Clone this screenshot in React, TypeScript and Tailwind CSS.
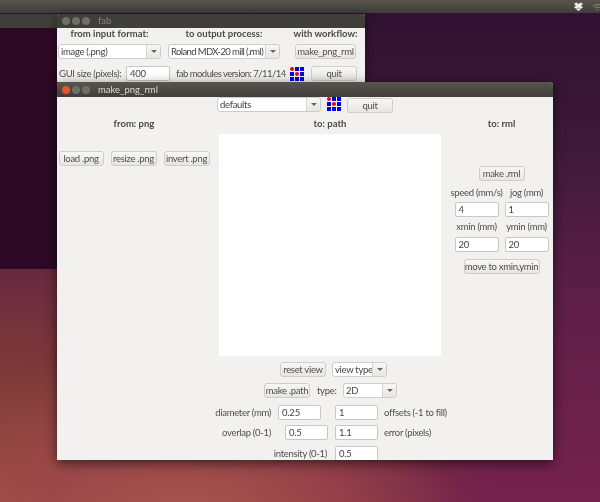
import type { ReactNode } from "react";

function Dots() {
  const red = [0, 4];
  return (
    <svg width="14" height="14" viewBox="0 0 14 14" className="shrink-0">
      {[0, 1, 2, 3, 4, 5, 6, 7, 8].map((i) => (
        <rect
          key={i}
          x={(i % 3) * 5}
          y={Math.floor(i / 3) * 5}
          width="4"
          height="4"
          rx={red.includes(i) ? 2 : 0}
          fill={red.includes(i) ? "#f00000" : "#0000e6"}
        />
      ))}
    </svg>
  );
}

function Btn({ w, children }: { w: string; children: ReactNode }) {
  return (
    <div className={`${w} h-[15px] shrink-0 flex items-center justify-center rounded-[3px] border border-[#cfcdc9] bg-gradient-to-b from-[#f8f7f6] to-[#e8e6e3] text-[#4f4f4f] text-[9.5px] tracking-[-0.3px] leading-none whitespace-nowrap`}>
      {children}
    </div>
  );
}

function Field({ w = "w-[44px]", children }: { w?: string; children: ReactNode }) {
  return (
    <div className={`${w} h-[15px] shrink-0 flex items-center pl-[3px] rounded-[2px] border border-[#c9c7c3] bg-white text-[#444] text-[9.5px] tracking-[-0.2px] leading-none`}>
      {children}
    </div>
  );
}

function Combo({ w, children }: { w: string; children: ReactNode }) {
  return (
    <div className={`${w} h-[15px] shrink-0 flex rounded-[3px] border border-[#cfcdc9] bg-white text-[#444] text-[9.5px] tracking-[-0.3px] leading-none overflow-hidden`}>
      <div className="flex-1 flex items-center pl-[2px] whitespace-nowrap overflow-hidden">{children}</div>
      <div className="w-[14px] shrink-0 flex items-center justify-center border-l border-[#d5d3cf] bg-gradient-to-b from-[#f8f7f6] to-[#e8e6e3]">
        <div className="w-0 h-0 border-l-[3px] border-r-[3px] border-t-[3px] border-l-transparent border-r-transparent border-t-[#666]" />
      </div>
    </div>
  );
}

function Controls({ active }: { active?: boolean }) {
  return (
    <div className="flex gap-[2px] items-center">
      <div className={`w-[8px] h-[8px] rounded-full ${active ? "bg-[#e2572c]" : "bg-[#6f6e67]"}`} />
      <div className="w-[8px] h-[8px] rounded-full bg-[#6f6e67]" />
      <div className="w-[8px] h-[8px] rounded-full bg-[#6f6e67]" />
    </div>
  );
}

function Label({ children, className = "" }: { children: ReactNode; className?: string }) {
  return <div className={`text-[9.5px] tracking-[-0.3px] leading-[10px] text-[#4f4f4f] whitespace-nowrap shrink-0 ${className}`}>{children}</div>;
}

function Head({ children, className = "" }: { children: ReactNode; className?: string }) {
  return <div className={`text-[9.5px] leading-[10px] font-bold text-[#4a4a4a] whitespace-nowrap shrink-0 ${className}`}>{children}</div>;
}

export default function App() {
  return (
    <div className="relative w-[600px] h-[502px] overflow-hidden font-['Lato','Noto_Sans',sans-serif] blur-[0.3px] bg-[radial-gradient(ellipse_280px_200px_at_32%_108%,#ac574e_0%,rgba(160,72,78,0.7)_55%,rgba(120,40,75,0)_100%),radial-gradient(ellipse_500px_300px_at_0%_100%,#9c4e40_0%,rgba(126,60,54,0.9)_45%,rgba(92,42,44,0)_100%),linear-gradient(to_bottom,#2f1030_0%,#3f1a38_30%,#5e1f46_60%,#75224e_100%)]">
      {/* window behind the others, at the left edge */}
      <div className="absolute left-0 top-[14px] w-[57px] h-[255px] bg-[#2c0a26]">
        <div className="h-[14px] bg-[#3f3e39]" />
      </div>

      {/* top panel */}
      <div className="absolute top-0 left-0 w-full h-[13px] bg-gradient-to-b from-[#57554d] to-[#3e3d38] flex items-center justify-end gap-[9px] overflow-hidden">
        <svg width="9" height="9" viewBox="0 0 9 9" fill="#eee"><path d="M2.3 0.5 4.5 2 6.7 0.5 9 2.1 7 3.7 9 5.3 6.7 6.9 4.5 5.4 2.3 6.9 0 5.3 2 3.7 0 2.1zM2.4 7.4 4.5 6 6.6 7.4 4.5 8.9z" /></svg>
        <svg width="8" height="8" viewBox="0 0 8 8" fill="none" stroke="#8a8982" strokeWidth="1"><path d="M0.5 3.5a8 8 0 0 1 10 0M2.5 5a5 5 0 0 1 6 0M4.5 7a2 2 0 0 1 2 0" /></svg>
      </div>

      {/* fab window */}
      <div className="absolute left-[57px] top-[14px] w-[308px] bg-[#f2f1f0] rounded-t-[3px] shadow-[0_2px_10px_rgba(0,0,0,0.45)]">
        <div className="h-[14px] bg-[#3f3e39] rounded-t-[3px] flex items-center pl-[5px] gap-[8px]">
          <Controls />
          <span className="text-[9.5px] leading-none text-[#85847c]">fab</span>
        </div>
        <div className="h-[54px] pl-[1px] pt-[1px]">
          <div className="flex">
            <Head className="w-[103px] text-center">from input format:</Head>
            <Head className="w-[112px] ml-[7px] text-center">to output process:</Head>
            <Head className="w-[61px] ml-[15px] flex justify-center">with workflow:</Head>
          </div>
          <div className="flex items-center mt-[5px]">
            <Combo w="w-[103px]">image (.png)</Combo>
            <Combo w="w-[112px] ml-[7px]"><span className="tracking-[-0.62px]">Roland MDX-20 mill (.rml)</span></Combo>
            <Btn w="w-[61px] ml-[15px]">make_png_rml</Btn>
          </div>
          <div className="flex items-center mt-[7px]">
            <Label className="w-[68px] pl-[1px]">GUI size (pixels):</Label>
            <Field>400</Field>
            <Label className="w-[120px] pl-[6px] tracking-[-0.52px]">fab modules version: 7/11/14</Label>
            <Dots />
            <Btn w="w-[46px] ml-[7px]">quit</Btn>
          </div>
        </div>
      </div>

      {/* make_png_rml window */}
      <div className="absolute left-[57px] top-[82px] w-[496px] h-[378px] bg-[#f2f1f0] rounded-t-[4px] shadow-[0_3px_12px_rgba(0,0,0,0.6)]">
        <div className="h-[15px] rounded-t-[4px] bg-gradient-to-b from-[#57554d] to-[#3f3e39] flex items-center pl-[5px] gap-[8px]">
          <Controls active />
          <span className="text-[9.5px] leading-none text-[#dfdbd2]">make_png_rml</span>
        </div>

        <div className="flex items-start gap-[6px] pl-[160px] h-[16px]">
          <Combo w="w-[104px]">defaults</Combo>
          <Dots />
          <div className="mt-[1px]"><Btn w="w-[46px]">quit</Btn></div>
        </div>

        <div className="flex h-[347px] overflow-hidden">
          {/* left */}
          <div className="w-[162px] shrink-0">
            <div className="w-[152px] ml-[1px] flex flex-col items-center">
              <Head className="mt-[6px]">from: png</Head>
              <div className="flex gap-[7px] mt-[22px]">
                <Btn w="w-[45px]">load .png</Btn>
                <Btn w="w-[46px]">resize .png</Btn>
                <Btn w="w-[46px]">invert .png</Btn>
              </div>
            </div>
          </div>

          {/* center */}
          <div className="w-[222px] shrink-0 flex flex-col items-center">
            <Head className="mt-[6px]">to: path</Head>
            <div className="w-[222px] h-[222px] shrink-0 bg-white mt-[5px]" />
            <div className="flex gap-[6px] mt-[6px] self-start pl-[61px]">
              <Btn w="w-[46px]">reset view</Btn>
              <Combo w="w-[55px]">view type</Combo>
            </div>
            <div className="flex items-center mt-[6px] self-start pl-[45px]">
              <Btn w="w-[46px]">make .path</Btn>
              <Label className="w-[33px] pl-[7px]">type:</Label>
              <Combo w="w-[54px]">2D</Combo>
            </div>
            <div className="self-start -ml-[60px] mt-[7px] flex items-center">
              <Label className="w-[112px] text-right">diameter (mm)</Label>
              <Field w="w-[43px] ml-[7px]">0.25</Field>
              <Field w="w-[43px] ml-[14px]">1</Field>
              <Label className="ml-[6px]">offsets (-1 to fill)</Label>
            </div>
            <div className="self-start -ml-[60px] mt-[5px] flex items-center">
              <Label className="w-[112px] text-right">overlap (0-1)</Label>
              <Field w="w-[43px] ml-[14px]">0.5</Field>
              <Field w="w-[43px] ml-[7px]">1.1</Field>
              <Label className="ml-[6px]">error (pixels)</Label>
            </div>
            <div className="self-start -ml-[60px] mt-[6px] flex items-center">
              <Label className="w-[168px] text-right">intensity (0-1)</Label>
              <Field w="w-[43px] ml-[8px]">0.5</Field>
            </div>
          </div>

          {/* right */}
          <div className="flex-1 pl-[9px] flex flex-col items-center">
            <Head className="mt-[6px]">to: rml</Head>
            <div className="mt-[37px]"><Btn w="w-[46px]">make .rml</Btn></div>
            <div className="grid grid-cols-[44px_44px] gap-x-[6px] mt-[7px]">
              <div className="flex justify-center"><Label>speed (mm/s)</Label></div>
              <div className="flex justify-center"><Label>jog (mm)</Label></div>
            </div>
            <div className="flex mt-[4px] gap-[6px]">
              <Field>4</Field>
              <Field>1</Field>
            </div>
            <div className="grid grid-cols-[44px_44px] gap-x-[6px] mt-[5px]">
              <div className="flex justify-center"><Label>xmin (mm)</Label></div>
              <div className="flex justify-center"><Label>ymin (mm)</Label></div>
            </div>
            <div className="flex mt-[5px] gap-[6px]">
              <Field>20</Field>
              <Field>20</Field>
            </div>
            <div className="mt-[7px]"><Btn w="w-[76px]">move to xmin,ymin</Btn></div>
          </div>
        </div>
      </div>
    </div>
  );
}
